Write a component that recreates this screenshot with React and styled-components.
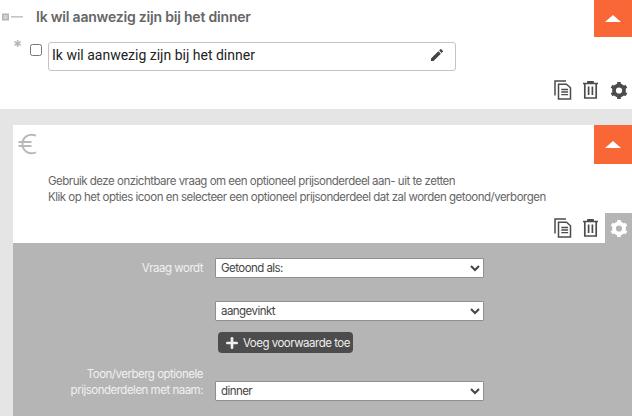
import React from "react";
import styled, { createGlobalStyle } from "styled-components";
import { MdEdit } from "react-icons/md";
import { Plus } from "lucide-react";

const Global = createGlobalStyle`
  html, body { margin: 0; padding: 0; background: #e5e5e5; overflow: hidden; }
  * { box-sizing: border-box; }
  body { font-family: Inter, "Noto Sans", sans-serif; }
`;
const Page = styled.div`
  width: 632px; height: 416px; overflow: hidden; background: #e5e5e5;
  display: flex; flex-direction: column;
`;
const TopCard = styled.section`
  height: 109px; background: #fff; display: flex; flex-direction: column; flex: none;
`;
const Header = styled.header`
  display: flex; align-items: flex-start; justify-content: space-between;
  height: ${p => p.$h}px; flex: none;
`;
const TitleWrap = styled.div`
  display: flex; align-items: center; height: 33px; padding-left: 2px;
`;
const Handle = styled.svg`width: 22px; height: 8px; flex: none; margin-top: 1px;`;
const Title = styled.h2`
  margin: 0 0 0 12px; font-size: 14px; font-weight: 600; color: #666; letter-spacing: -0.2px; white-space: nowrap;
`;
const Collapse = styled.button`
  width: 38px; height: ${p => p.$h}px; background: #f96737; border: 0; padding: 0;
  display: flex; align-items: center; justify-content: center;
  &::before { content: ""; border-left: 8px solid transparent; border-right: 8px solid transparent; border-bottom: 7px solid #fff; }
`;
const InputRow = styled.div`
  display: flex; align-items: flex-start; padding: 5px 0 0 13px; height: 34px; flex: none;
`;
const Star = styled.span`
  width: 17px; font-size: 17px; line-height: 17px; font-weight: 600; color: #b4b4b4; margin-top: -3px;
`;
const Check = styled.input`
  appearance: none; width: 12px; height: 12px; margin: 2px 6px 0 0; border: 1px solid #767676; border-radius: 2.5px; background: #fff; flex: none;
`;
const TextBox = styled.div`
  width: 408px; height: 29px; border: 1px solid #c4c4c4; border-radius: 3px; display: flex; align-items: center; justify-content: space-between;
  padding: 0 10px 3px 3px; font-size: 14px; color: #222; font-family: Roboto, sans-serif;
  svg { color: #444; }
`;
const Tools = styled.div`
  display: flex; justify-content: flex-end; align-items: flex-start; height: ${p => p.$h}px; flex: none; padding-top: ${p => p.$pt}px;
`;
const ToolBtn = styled.span`
  display: flex; align-items: center; justify-content: center; color: #4c4c4c; width: ${p => p.$w}px; height: 20px; flex: none;
`;
const GearTab = styled.span`
  display: flex; align-items: center; justify-content: center; width: 27px; height: 30px; background: ${p => p.$on ? "#b5b5b5" : "transparent"}; color: ${p => p.$on ? "#fff" : "#4c4c4c"};
  margin-top: -5px; flex: none;
`;
const SecondWrap = styled.div`
  margin: 16px 0 0 13px; flex: 1; display: flex; flex-direction: column; background: #fff; min-height: 0;
`;
const EuroMark = styled.svg`width: 20px; height: 22px; margin: 8px 0 0 5px; color: #b9b9b9;`;
const Desc = styled.p`
  margin: 0; padding: 9px 0 0 35px; font-size: 11.5px; line-height: 16px; color: #666; letter-spacing: -0.5px; height: 49px; flex: none; white-space: nowrap;
`;
const Settings = styled.div`
  background: #b5b5b5; flex: 1; padding-top: 15px; display: grid; grid-template-columns: 190px 269px; column-gap: 12px; align-content: start;
  grid-auto-rows: min-content;
`;
const Label = styled.label`
  font-size: 11.5px; line-height: 16px; color: #f1f1f1; text-align: right; letter-spacing: -0.5px; white-space: nowrap;
  align-self: ${p => p.$top ? "start" : "center"};
  padding-bottom: ${p => p.$top ? 3 : 0}px;
`;
const Select = styled.select`
  width: 269px; height: 20px; font-family: Inter, sans-serif; font-size: 11.5px; letter-spacing: -0.55px; color: #444; background-color: #fff; border: 1px solid #8f8f8f; border-radius: 1px; padding: 0 0 0 1px; align-self: end;
`;
const Spacer = styled.div``;
const AddBtn = styled.button`
  grid-column: 2; justify-self: start; margin: 11px 0 13px 3px; width: 135px; height: 21px; background: #4c4c4c; color: #efefef; border: 0; border-radius: 4px;
  display: flex; align-items: center; padding: 0 0 0 6px; gap: 3px; font-family: Inter, sans-serif; font-size: 11.5px; letter-spacing: -0.5px; white-space: nowrap;
`;
const Gap = styled.div`grid-column: 1 / -1; height: 23px;`;

const CopyIcon = () => (
  <svg width="18" height="20" viewBox="0 0 18 20" fill="none" stroke="currentColor" strokeWidth="1.5">
    <path d="M12 1H1V15.5" />
    <path d="M4.500 4.200h8l4 3.600v11.200H4.500z" fill="#fff" />
    <path d="M7.300 9.500h6.800M7.300 12h6.800M7.300 14.600h6.800" strokeWidth="1.4" />
  </svg>
);
const TrashIcon = () => (
  <svg width="15" height="18" viewBox="0 0 15 18" fill="none" stroke="currentColor" strokeWidth="1.7">
    <path d="M0 2.500h15M5 2.500V.9h5v1.600" />
    <path d="M1.800 2.500v14.500h11.400V2.500" />
    <path d="M5.600 5.500v8.500M9.400 5.500v8.500" />
  </svg>
);
const GearIcon = () => (
  <svg width="18" height="19" viewBox="0 0 18 19" fill="none" stroke="currentColor">
    <circle cx="9" cy="9.500" r="5" strokeWidth="3.800" />
    <path d="M9 1v2.500M9 15.500V18M1.600 5.250l2.200 1.250M14.200 12.500l2.200 1.250M1.600 13.750l2.200-1.250M14.200 6.500l2.200-1.250" strokeWidth="3.600" />
  </svg>
);
const Actions = ({ on }) => (
  <>
    <ToolBtn $w={26}><CopyIcon /></ToolBtn>
    <ToolBtn $w={29}><TrashIcon /></ToolBtn>
    <GearTab $on={on}><GearIcon /></GearTab>
  </>
);

export default function App() {
  return (
    <Page>
      <Global />
      <TopCard>
        <Header $h={37}>
          <TitleWrap>
            <Handle viewBox="0 0 22 8">
              <rect x="0" y="0.5" width="7" height="7" fill="#b4b4b4" />
              <path d="M1.500 3h4M1.500 5h4" stroke="#eee" />
              <rect x="9" y="3" width="12" height="1.600" fill="#c4c4c4" />
            </Handle>
            <Title>Ik wil aanwezig zijn bij het dinner</Title>
          </TitleWrap>
          <Collapse $h={37} aria-label="Inklappen" />
        </Header>
        <InputRow>
          <Star>*</Star>
          <Check type="checkbox" />
          <TextBox>Ik wil aanwezig zijn bij het dinner<MdEdit size={16} /></TextBox>
        </InputRow>
        <Tools $h={38} $pt={9}><Actions /></Tools>
      </TopCard>
      <SecondWrap>
        <Header $h={39}>
          <EuroMark viewBox="0 0 20 22" fill="none" stroke="currentColor" strokeWidth="1.900">
            <path d="M18 2.600C11 -0.200 4.500 4 4.500 11s6.500 11.200 13.500 8.400M0.500 9h13M0.500 13h13" />
          </EuroMark>
          <Collapse $h={39} aria-label="Inklappen" />
        </Header>
        <Desc>
          Gebruik deze onzichtbare vraag om een optioneel prijsonderdeel aan- uit te zetten<br />
          Klik op het opties icoon en selecteer een optioneel prijsonderdeel dat zal worden getoond/verborgen
        </Desc>
        <Tools $h={30} $pt={5}><Actions on /></Tools>
        <Settings>
          <Label>Vraag wordt</Label>
          <Select defaultValue="a"><option value="a">Getoond als:</option></Select>
          <Gap />
          <Spacer />
          <Select defaultValue="a"><option value="a">aangevinkt</option></Select>
          <AddBtn><Plus size={16} strokeWidth={4} />Voeg voorwaarde toe</AddBtn>
          <Label $top>Toon/verberg optionele<br />prijsonderdelen met naam:</Label>
          <Select defaultValue="a"><option value="a">dinner</option></Select>
        </Settings>
      </SecondWrap>
    </Page>
  );
}
